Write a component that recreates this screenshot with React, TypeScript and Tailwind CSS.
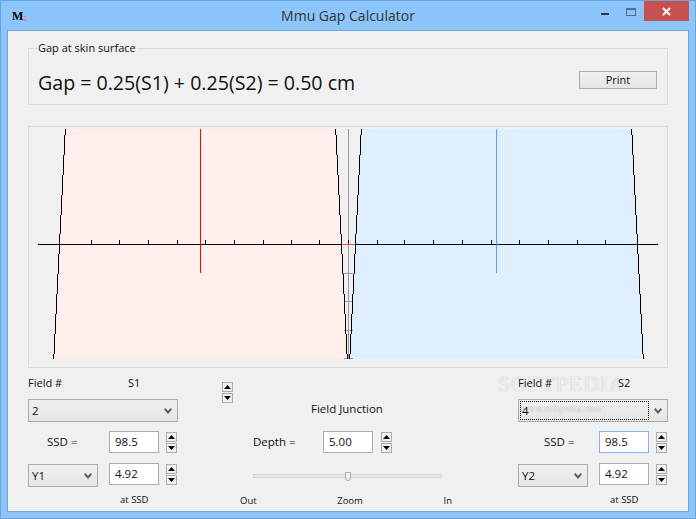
const ui = { fontFamily: '"Open Sans", "Noto Sans", sans-serif' };

// y boundaries of the beam edge steps, each step moves the edge by 1px
const steps = [129, 135, 155, 175, 195, 215, 234, 254, 274, 294, 314, 334, 354, 359];
const ticks = [91, 119, 148, 177, 205, 234, 263, 291, 319, 348, 377, 404, 433, 462, 491, 519, 548, 577, 605];
const crossMarks = [
  { y: 273, x: 343, w: 10 },
  { y: 301, x: 345, w: 8 },
  { y: 330, x: 344, w: 9 },
  { y: 358, x: 344, w: 9 },
];

function Plot() {
  const segments = steps.slice(0, -1).map((y, i) => ({ i, y, h: steps[i + 1] - y }));
  return (
    <svg viewBox="29 127 638 240" className="block h-[240px] w-[638px]" shapeRendering="crispEdges">
      {segments.map(({ i, y, h }) => (
        <g key={i}>
          <rect x={65 - i} y={y} width={270 + 2 * i} height={h} fill="#fff0ee" />
          <rect x={361 - i} y={y} width={270 + 2 * i} height={h} fill="#dfefff" />
        </g>
      ))}
      <rect x={348} y={129} width={1} height={230} fill="#999999" />
      {crossMarks.map((m) => (
        <rect key={m.y} x={m.x} y={m.y} width={m.w} height={1} fill="#999999" />
      ))}
      <rect x={38} y={244} width={620} height={1} fill="#000000" />
      <rect x={342} y={244} width={14} height={1} fill="#ff5050" />
      {ticks.map((x) => (
        <rect key={x} x={x} y={240} width={1} height={4} fill="#000000" />
      ))}
      {segments.map(({ i, y, h }) => (
        <g key={i} fill="#000000">
          <rect x={65 - i} y={y} width={1} height={h} />
          <rect x={335 + i} y={y} width={1} height={h} />
          <rect x={361 - i} y={y} width={1} height={h} />
          <rect x={631 + i} y={y} width={1} height={h} />
        </g>
      ))}
      <rect x={200} y={129} width={1} height={144} fill="#ff0000" />
      <rect x={496} y={129} width={1} height={144} fill="#5b9bff" />
    </svg>
  );
}

function SpinButton({ down }: { down?: boolean }) {
  return (
    <div className="flex h-[10px] w-[11px] items-center justify-center border border-[#acacac] bg-[#f0f0f0]">
      <svg width="7" height="4" viewBox="0 0 7 4" className="block">
        <path d={down ? "M0 0H7L3.5 4Z" : "M0 4H7L3.5 0Z"} fill="#000000" />
      </svg>
    </div>
  );
}

function Spinner() {
  return (
    <div className="flex w-[11px] flex-col gap-px">
      <SpinButton />
      <SpinButton down />
    </div>
  );
}

function Chevron() {
  return (
    <svg width="8" height="6" viewBox="0 0 8 6" className="block shrink-0">
      <path d="M0.7 0.8L4 4.4L7.3 0.8" fill="none" stroke="#5f5f5f" strokeWidth="2" />
    </svg>
  );
}

function Select({ value, width, focused }: { value: string; width: string; focused?: boolean }) {
  return (
    <div
      className={`flex h-[23px] items-center justify-between border border-[#acacac] bg-gradient-to-b from-[#f0f0f0] to-[#e5e5e5] pr-[5px] text-[11.5px] text-[#111] ${width}`}
    >
      {focused ? (
        <div className="relative z-[2] ml-px flex h-[19px] w-[129px] items-center border border-dotted border-black pl-px">
          {value}
        </div>
      ) : (
        <span className="pl-[3px]">{value}</span>
      )}
      <Chevron />
    </div>
  );
}

function NumberBox({ value, focused }: { value: string; focused?: boolean }) {
  return (
    <div
      className={`flex h-[22px] w-[50px] items-center border bg-white pl-[5px] text-[11.5px] text-[#111] ${
        focused ? "border-[#7eb4ea]" : "border-[#acacac]"
      }`}
    >
      {value}
    </div>
  );
}

function FieldColumn({
  source,
  field,
  jaw,
  focused,
}: {
  source: string;
  field: string;
  jaw: string;
  focused?: boolean;
}) {
  return (
    <div className="flex w-[150px] shrink-0 flex-col">
      <div className="relative z-[2] mt-[7px] flex h-[16px] items-center text-[11px] text-[#111]">
        <span className="w-[100px]">Field #</span>
        <span>{source}</span>
      </div>
      <div className="mt-[8px]">
        <Select value={field} width="w-[150px]" focused={focused} />
      </div>
      <div className="mt-[9px] flex h-[22px] items-center">
        <span className={`w-[81px] text-[11.5px] text-[#111] ${focused ? "pl-[26px]" : "pl-[19px]"}`}>SSD =</span>
        <NumberBox value="98.5" focused={focused} />
        <div className="ml-[7px]">
          <Spinner />
        </div>
      </div>
      <div className="mt-[10px] flex items-start">
        <div className="mt-px">
          <Select value={jaw} width="w-[70px]" />
        </div>
        <div className="ml-[11px]">
          <NumberBox value="4.92" />
        </div>
        <div className="ml-[7px] mt-px">
          <Spinner />
        </div>
      </div>
      <div className="mt-[6px] pl-[92px] text-[9.5px] leading-[14px] text-[#111]">at SSD</div>
    </div>
  );
}

function MiddleColumn() {
  return (
    <div className="ml-[44px] flex w-[246px] shrink-0 flex-col">
      <div className="mt-[14px]">
        <Spinner />
      </div>
      <div className="mt-[-2px] pl-[89px] text-[11.5px] leading-[16px] text-[#111]">Field Junction</div>
      <div className="mt-[14px] flex h-[22px] items-center pl-[31px]">
        <span className="w-[70px] text-[11.5px] text-[#111]">Depth =</span>
        <NumberBox value="5.00" />
        <div className="ml-[8px]">
          <Spinner />
        </div>
      </div>
      <div className="relative ml-[31px] mt-[21px] h-[4px] w-[189px] border border-[#d6d6d6] bg-[#e7e7e7]">
        <div className="absolute left-[91px] top-[-3px] h-[9px] w-[6px] rounded-b-[3px] border border-[#acacac] bg-[#f0f0f0]" />
      </div>
      <div className="mt-[16px] flex justify-between pl-[18px] pr-[16px] text-[9.5px] leading-[14px] text-[#111]">
        <span>Out</span>
        <span>Zoom</span>
        <span>In</span>
      </div>
    </div>
  );
}

export default function App() {
  return (
    <div
      style={ui}
      className="relative flex h-[519px] w-[696px] flex-col overflow-hidden border border-[#6fa3d4] bg-[#8bc5fb]"
    >
      <div className="grid h-[29px] shrink-0 grid-cols-[1fr_auto_1fr] items-start">
        <div className="flex h-[29px] items-center pl-[11px]">
          <span className="text-[12px] font-bold leading-none text-black" style={{ fontFamily: '"Liberation Serif", serif' }}>
            M
          </span>
          <span className="mt-[5px] text-[7px] font-bold leading-none text-[#f08080]">2</span>
        </div>
        <div className="flex h-[29px] items-center pb-[1px] text-[14px] text-[#333]">Mmu Gap Calculator</div>
        <div className="flex items-start justify-end pr-[6px]">
          <div className="mr-[17px] mt-[12px] h-[2px] w-[8px] bg-[#2b3a4a]" />
          <div className="mr-[8px] mt-[7px] h-[8px] w-[10px] border border-t-2 border-[#4f6f90]" />
          <div className="flex h-[20px] w-[45px] items-center justify-center bg-[#c75050]">
            <svg width="9" height="9" viewBox="0 0 9 9" className="block">
              <path d="M1 1L8 8M8 1L1 8" stroke="#ffffff" strokeWidth="2" />
            </svg>
          </div>
        </div>
      </div>

      <div className="mx-[6px] mb-[6px] flex-1 border border-[#6ea6da] bg-[#f0f0f0] px-[20px] pt-[9px]">
        <div className="h-[65px] pt-[8px]">
          <div className="h-[57px] border border-[#dcdcdc]">
            <div className="ml-[8px] mt-[-9px] w-fit bg-[#f0f0f0] px-px text-[11px] leading-[16px] text-[#111]">
              Gap at skin surface
            </div>
            <div className="flex items-center justify-between pl-[9px] pr-[10px] pt-[7px]">
              <span className="pt-[7px] text-[19.6px] leading-[26px] text-[#111]">Gap = 0.25(S1) + 0.25(S2) = 0.50 cm</span>
              <button className="h-[18px] w-[78px] border border-[#acacac] bg-gradient-to-b from-[#f0f0f0] to-[#e5e5e5] text-[11px] leading-none text-[#111]">
                Print
              </button>
            </div>
          </div>
        </div>

        <div className="mt-[21px] h-[242px] border border-[#dcdcdc]">
          <Plot />
        </div>

        <div className="flex">
          <FieldColumn source="S1" field="2" jaw="Y1" />
          <MiddleColumn />
          <div className="ml-[50px]">
            <FieldColumn source="S2" field="4" jaw="Y2" focused />
          </div>
        </div>
      </div>

      {/* download site watermark, sits behind the right column's texts */}
      <div
        className="pointer-events-none absolute left-[497px] top-[371px] z-[1] text-[22px] leading-[24px] tracking-[1px] text-white/80"
        style={{ fontFamily: '"Liberation Serif", serif', textShadow: "0 0 1px #a8a8a8" }}
      >
        SOFTPEDIA
      </div>
      <div
        className="pointer-events-none absolute left-[520px] top-[401px] z-[1] text-[10px] leading-[14px] text-white/80"
        style={{ fontFamily: '"Liberation Serif", serif', textShadow: "0 0 1px #909090" }}
      >
        www.softpedia.com
      </div>
    </div>
  );
}
